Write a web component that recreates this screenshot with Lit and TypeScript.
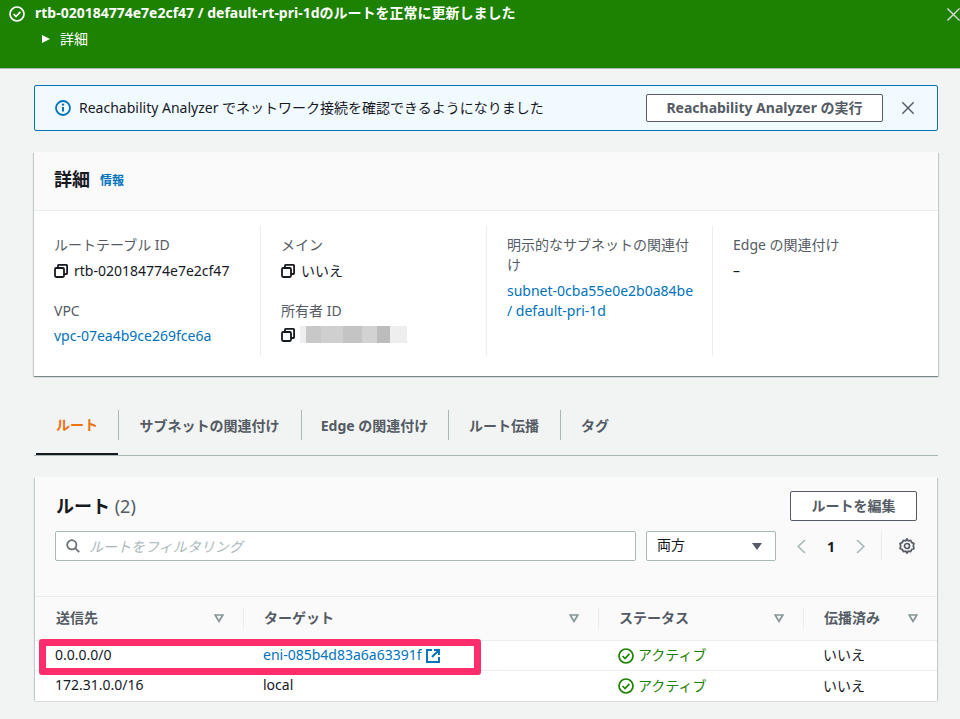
import { LitElement, html, css } from "lit";
import { customElement } from "lit/decorators.js";

const closeIcon = (c: string, s: number) => html`<svg width=${s} height=${s} viewBox="0 0 16 16" fill="none" stroke=${c} stroke-width="1.6"><path d="M1.5 1.5l13 13M14.5 1.5l-13 13"/></svg>`;
const copyIcon = html`<svg class="copy" width="14" height="14" viewBox="0 0 14 14" fill="none" stroke="#16191f" stroke-width="1.8"><rect x="1" y="4" width="9" height="9" rx="1.2"/><path d="M4 3.8V1.6a.7.7 0 0 1 .7-.7h7.7a.7.7 0 0 1 .7.7v7.7a.7.7 0 0 1-.7.7H10.2"/></svg>`;
const okIcon = (c: string, s: number) => html`<svg width=${s} height=${s} viewBox="0 0 16 16" fill="none" stroke=${c} stroke-width="1.7"><circle cx="8" cy="8" r="7"/><path d="M4.6 8l2.4 2.5 4.4-4.6"/></svg>`;
const sortIcon = html`<svg class="sort" width="10" height="9" viewBox="0 0 10 9" fill="none" stroke="#879596" stroke-width="1.7"><path d="M1.2 1h7.6L5 7.4z"/></svg>`;

@customElement("app-root")
export class AppRoot extends LitElement {
  static styles = css`
    :host { display: block; width: 960px; height: 719px; overflow: hidden; background: #f2f3f3; color: #16191f; font-family: "Noto Sans", "Noto Sans CJK JP", sans-serif; font-size: 14px; position: relative; }
    * { box-sizing: border-box; }
    a { color: #0073bb; text-decoration: none; }
    .flash { height: 69px; background: #1d8102; border-bottom: 1px solid #aab7b8; color: #fff; padding: 5px 0 0 9px; display: flex; justify-content: space-between; }
    .flash-title { display: flex; align-items: center; gap: 10px; font-weight: 700; line-height: 18px; height: 18px; }
    .flash-title span { margin-top: -3px; }
    .flash-detail { display: flex; align-items: center; gap: 10px; margin: 7px 0 0 33px; line-height: 18px; }
    .tri { width: 0; height: 0; border-left: 8px solid #fff; border-top: 4.5px solid transparent; border-bottom: 4.5px solid transparent; }
    .flash-close { margin: 2px -1px 0 0; }
    .main { padding: 16px 22px 0 34px; display: flex; flex-direction: column; }
    .info { height: 46px; background: #f1faff; border: 1px solid #0073bb; border-radius: 2px; display: flex; align-items: center; padding: 0 22px 0 20px; }
    .info-text { margin-left: 8px; flex: 1; padding-bottom: 3px; }
    .btn { background: #fff; border: 1px solid #545b64; border-radius: 2px; color: #545b64; font-weight: 700; display: flex; align-items: center; justify-content: center; height: 28px; padding-bottom: 2px; }
    .info .btn { width: 237px; margin-right: 18px; }
    .card { background: #fff; box-shadow: 0 1px 1px 0 rgba(0,28,36,.3), 1px 1px 1px 0 rgba(0,28,36,.15), -1px 1px 1px 0 rgba(0,28,36,.15); }
    .details { margin-top: 21px; height: 224px; }
    .details-head { height: 59px; background: #fafafa; border-bottom: 1px solid #eaeded; display: flex; align-items: center; padding: 0 20px 5px; gap: 10px; }
    .details-head h2 { margin: 0; font-size: 18px; font-weight: 700; line-height: 24px; }
    .details-head a { font-size: 12px; font-weight: 700; margin-top: 3px; }
    .cols { display: grid; grid-template-columns: 226px 226px 226px 1fr; padding-top: 15px; }
    .col { height: 130px; border-left: 1px solid #eaeded; padding: 9px 14px 0 20px; }
    .col:first-child { border-left: none; }
    .label { color: #545b64; line-height: 20px; }
    .val { display: flex; align-items: center; gap: 6px; line-height: 20px; margin-top: 6px; }
    .field + .field { margin-top: 20px; }
    .field + .field .val { margin-top: 5px; }
    .blur { width: 107px; height: 17px; margin-left: -1px; background: linear-gradient(90deg, #eee 0 6%, #c8c8c8 6% 20%, #cfcfcf 20% 40%, #c4c4c4 40% 58%, #d2d2d2 58% 72%, #bcbcbc 72% 84%, #eee 84%); }
    .tabs { margin-top: 33px; height: 47px; border-bottom: 1px solid #aab7b8; display: flex; padding-left: 2px; padding-top: 1px; }
    .tab { height: 45px; display: flex; align-items: center; justify-content: center; font-weight: 700; color: #545b64; position: relative; padding-bottom: 19px; padding-top: 3px; }
    .tab + .tab::before { content: ""; position: absolute; left: 0; top: 0; height: 30px; border-left: 1px solid #aab7b8; }
    .tab.on { color: #ec7211; border-bottom: 2px solid #16191f; }
    .routes { margin: 21px 1px 0; height: 223px; background: #fafafa; }
    .r-top { padding: 14px 20px 0 21px; display: flex; justify-content: space-between; align-items: flex-start; height: 40px; }
    .r-title { font-size: 18px; font-weight: 700; line-height: 30px; }
    .r-title span { font-weight: 400; color: #545b64; }
    .routes .btn { width: 127px; height: 30px; }
    .filter { display: flex; align-items: center; padding: 14px 20px 0 20px; }
    .search { width: 581px; height: 30px; border: 1px solid #aab7b8; border-radius: 2px; background: #fff; display: flex; align-items: center; padding-left: 10px; gap: 9px; color: #aab7b8; font-style: italic; }
    .select { width: 130px; height: 30px; margin-left: 10px; border: 1px solid #aab7b8; border-radius: 2px; background: #fff; display: flex; align-items: center; justify-content: space-between; padding: 0 13px 0 10px; color: #16191f; }
    .select span { padding-bottom: 5px; }
    .caret { width: 0; height: 0; border-top: 7px solid #545b64; border-left: 5.5px solid transparent; border-right: 5.5px solid transparent; }
    .pager { display: flex; align-items: center; margin-left: 21px; height: 30px; }
    .pager b { width: 50px; text-align: center; }
    .sep { height: 30px; border-left: 1px solid #eaeded; margin-left: 16px; margin-right: 17px; }
    .table { margin-top: 35px; border-top: 1px solid #eaeded; }
    .row { display: grid; grid-template-columns: 208px 355px 205px 1fr; }
    .head { height: 44px; border-bottom: 1px solid #eaeded; align-items: center; font-weight: 700; color: #545b64; }
    .th { height: 21px; border-left: 1px solid #eaeded; padding: 0 19px 0 20px; display: flex; align-items: center; justify-content: space-between; }
    .th span { margin-top: -4px; }
    .th:first-child { border-left: none; padding-left: 21px; }
    .body { height: 30px; background: #fff; border-bottom: 1px solid #eaeded; align-items: center; }
    .body:last-child { border-bottom: none; }
    .td { padding-left: 20px; display: flex; align-items: center; gap: 4px; }
    .td > span { padding-bottom: 3px; }
    .green { color: #1d8102; }
    .highlight { position: absolute; left: 39px; top: 639px; width: 442px; height: 36px; border: 7px solid #ff2d6b; border-radius: 3px; pointer-events: none; }
  `;

  render() {
    const tabs = [["ルート", 82], ["サブネットの関連付け", 183], ["Edge の関連付け", 147], ["ルート伝播", 112], ["タグ", 70]] as [string, number][];
    return html`
      <div class="flash">
        <div>
          <div class="flash-title">${okIcon("#fff", 16)}<span>rtb-020184774e7e2cf47 / default-rt-pri-1dのルートを正常に更新しました</span></div>
          <div class="flash-detail"><i class="tri"></i><span>詳細</span></div>
        </div>
        <div class="flash-close">${closeIcon("#d5dbdb", 15)}</div>
      </div>
      <div class="main">
        <div class="info">
          <svg width="16" height="16" viewBox="0 0 16 16" fill="none"><circle cx="8" cy="8" r="7" stroke="#0073bb" stroke-width="1.8"/><path d="M8 7v4.5" stroke="#0073bb" stroke-width="2"/><circle cx="8" cy="4.6" r="1.2" fill="#0073bb"/></svg>
          <span class="info-text">Reachability Analyzer でネットワーク接続を確認できるようになりました</span>
          <div class="btn">Reachability Analyzer の実行</div>
          ${closeIcon("#545b64", 14)}
        </div>
        <div class="card details">
          <div class="details-head"><h2>詳細</h2><a>情報</a></div>
          <div class="cols">
            <div class="col">
              <div class="field"><div class="label">ルートテーブル ID</div><div class="val">${copyIcon}<span>rtb-020184774e7e2cf47</span></div></div>
              <div class="field"><div class="label">VPC</div><div class="val"><a>vpc-07ea4b9ce269fce6a</a></div></div>
            </div>
            <div class="col">
              <div class="field"><div class="label">メイン</div><div class="val">${copyIcon}<span>いいえ</span></div></div>
              <div class="field"><div class="label">所有者 ID</div><div class="val">${copyIcon}<div class="blur"></div></div></div>
            </div>
            <div class="col">
              <div class="field"><div class="label">明示的なサブネットの関連付け</div><div class="val"><a>subnet-0cba55e0e2b0a84be / default-pri-1d</a></div></div>
            </div>
            <div class="col">
              <div class="field"><div class="label">Edge の関連付け</div><div class="val">–</div></div>
            </div>
          </div>
        </div>
        <div class="tabs">
          ${tabs.map(([t, w], i) => html`<div class="tab ${i === 0 ? "on" : ""}" style="width:${w}px">${t}</div>`)}
        </div>
        <div class="card routes">
          <div class="r-top">
            <div class="r-title">ルート <span>(2)</span></div>
            <div class="btn">ルートを編集</div>
          </div>
          <div class="filter">
            <div class="search">
              <svg width="14" height="14" viewBox="0 0 14 14" fill="none" stroke="#687078" stroke-width="1.8"><circle cx="5.8" cy="5.8" r="4.6"/><path d="M9.2 9.2l4 4"/></svg>
              <span>ルートをフィルタリング</span>
            </div>
            <div class="select"><span>両方</span><i class="caret"></i></div>
            <div class="pager">
              <svg width="9" height="15" viewBox="0 0 9 15" fill="none" stroke="#aab7b8" stroke-width="1.6"><path d="M8 1L1.2 7.5 8 14"/></svg>
              <b>1</b>
              <svg width="9" height="15" viewBox="0 0 9 15" fill="none" stroke="#aab7b8" stroke-width="1.6"><path d="M1 1l6.8 6.5L1 14"/></svg>
              <div class="sep"></div>
              <svg width="16" height="16" viewBox="0 0 16 16" fill="none" stroke="#545b64" stroke-width="1.7"><path d="M8 .9l1.3 1.9 2.3-.3 1.2 2 2.1 1-.6 2.5.6 2.5-2.1 1-1.2 2-2.3-.3L8 15.1l-1.3-1.9-2.3.3-1.2-2-2.1-1L1.7 8l-.6-2.5 2.1-1 1.2-2 2.3.3z"/><circle cx="8" cy="8" r="2.5"/></svg>
            </div>
          </div>
          <div class="table">
            <div class="row head">
              <div class="th"><span>送信先</span>${sortIcon}</div>
              <div class="th"><span>ターゲット</span>${sortIcon}</div>
              <div class="th"><span>ステータス</span>${sortIcon}</div>
              <div class="th"><span>伝播済み</span>${sortIcon}</div>
            </div>
            <div class="row body">
              <div class="td"><span>0.0.0.0/0</span></div>
              <div class="td"><span><a>eni-085b4d83a6a63391f</a></span><svg width="14" height="14" viewBox="0 0 14 14" fill="none" stroke="#0073bb" stroke-width="1.9"><path d="M6 1H1v12h12V8M8 1h5v5M13 1L6 8"/></svg></div>
              <div class="td green">${okIcon("#1d8102", 16)}<span>アクティブ</span></div>
              <div class="td"><span>いいえ</span></div>
            </div>
            <div class="row body">
              <div class="td"><span>172.31.0.0/16</span></div>
              <div class="td"><span>local</span></div>
              <div class="td green">${okIcon("#1d8102", 16)}<span>アクティブ</span></div>
              <div class="td"><span>いいえ</span></div>
            </div>
          </div>
        </div>
      </div>
      <div class="highlight"></div>
    `;
  }
}
